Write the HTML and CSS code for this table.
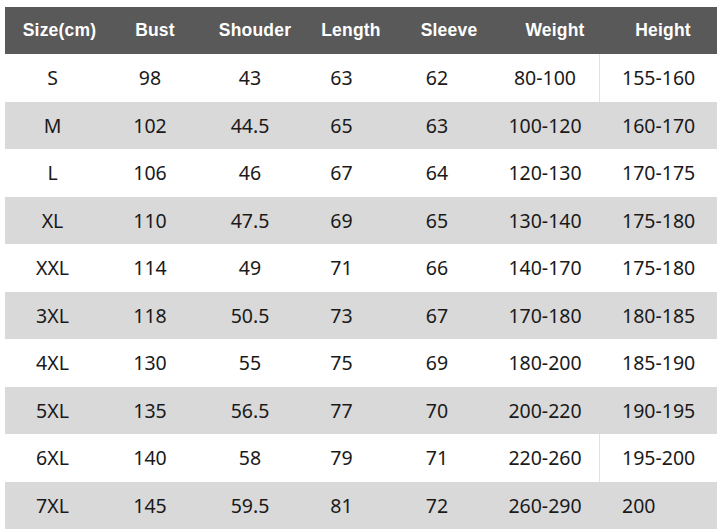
FILE: index.html
```html
<!DOCTYPE html>
<html>
<head>
<meta charset="utf-8">
<link rel="stylesheet" href="styles.css">
</head>
<body>
<div class="table">
  <div class="row head">
    <div class="h h1">Size(cm)</div>
    <div class="h h2">Bust</div>
    <div class="h h3">Shouder</div>
    <div class="h h4">Length</div>
    <div class="h h5">Sleeve</div>
    <div class="h h6">Weight</div>
    <div class="h h7">Height</div>
  </div>
  <div class="row">
    <div class="c">S</div><div class="c">98</div><div class="c">43</div><div class="c">63</div><div class="c">62</div><div class="c">80-100</div><div class="c last sep">155-160</div>
  </div>
  <div class="row gray">
    <div class="c">M</div><div class="c">102</div><div class="c">44.5</div><div class="c">65</div><div class="c">63</div><div class="c">100-120</div><div class="c last">160-170</div>
  </div>
  <div class="row">
    <div class="c">L</div><div class="c">106</div><div class="c">46</div><div class="c">67</div><div class="c">64</div><div class="c">120-130</div><div class="c last">170-175</div>
  </div>
  <div class="row gray">
    <div class="c">XL</div><div class="c">110</div><div class="c">47.5</div><div class="c">69</div><div class="c">65</div><div class="c">130-140</div><div class="c last">175-180</div>
  </div>
  <div class="row">
    <div class="c">XXL</div><div class="c">114</div><div class="c">49</div><div class="c">71</div><div class="c">66</div><div class="c">140-170</div><div class="c last">175-180</div>
  </div>
  <div class="row gray">
    <div class="c">3XL</div><div class="c">118</div><div class="c">50.5</div><div class="c">73</div><div class="c">67</div><div class="c">170-180</div><div class="c last">180-185</div>
  </div>
  <div class="row">
    <div class="c">4XL</div><div class="c">130</div><div class="c">55</div><div class="c">75</div><div class="c">69</div><div class="c">180-200</div><div class="c last">185-190</div>
  </div>
  <div class="row gray">
    <div class="c">5XL</div><div class="c">135</div><div class="c">56.5</div><div class="c">77</div><div class="c">70</div><div class="c">200-220</div><div class="c last">190-195</div>
  </div>
  <div class="row">
    <div class="c">6XL</div><div class="c">140</div><div class="c">58</div><div class="c">79</div><div class="c">71</div><div class="c">220-260</div><div class="c last sep">195-200</div>
  </div>
  <div class="row gray">
    <div class="c">7XL</div><div class="c">145</div><div class="c">59.5</div><div class="c">81</div><div class="c">72</div><div class="c">260-290</div><div class="c last">200</div>
  </div>
</div>
</body>
</html>
```
FILE: styles.css
```css
html, body {
  margin: 0;
  padding: 0;
  background: #ffffff;
}
body {
  padding: 7px 0 0 5px;
}
.table {
  width: 712px;
}
.row {
  display: grid;
  grid-template-columns: 95px 100px 100px 83px 108px 108px 118px;
  height: 47.5px;
  align-items: stretch;
  background: #ffffff;
}
.row.gray {
  background: #d9d9d9;
}
.row.head {
  height: 47px;
  background: #595959;
}
.h {
  display: flex;
  align-items: center;
  justify-content: center;
  font-family: "Liberation Sans", Arial, sans-serif;
  font-weight: bold;
  font-size: 17.5px;
  color: #ffffff;
  letter-spacing: 0.2px;
}
.h1 { padding-left: 14px; }
.h2 { padding-left: 10px; }
.h3 { padding-left: 10px; }
.h4 { padding-left: 19px; }
.h5 { padding-left: 24px; }
.h6 { padding-left: 20px; }
.h7 { padding-left: 10px; }
.c {
  display: flex;
  align-items: center;
  justify-content: center;
  font-family: "Noto Sans", "Open Sans", sans-serif;
  font-size: 19.5px;
  color: #1a1a1a;
}
.c.last {
  justify-content: flex-start;
  padding-left: 23px;
}
.c.sep {
  border-left: 1px solid #e2e2e2;
  padding-left: 22px;
}
```
